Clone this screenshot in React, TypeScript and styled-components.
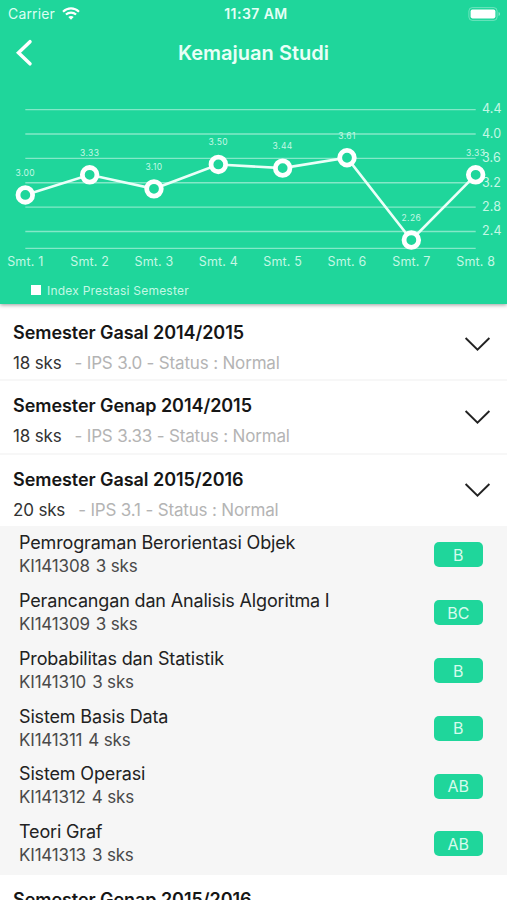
import React from "react";
import styled, { createGlobalStyle } from "styled-components";

const GREEN = "#1fd69b";

const GlobalStyle = createGlobalStyle`
  * { box-sizing: border-box; }
  html, body { margin: 0; height: 900px; overflow: hidden; background: #fff; }
  body { font-family: Inter, "Liberation Sans", sans-serif; }
`;

const Screen = styled.main`
  width: 507px;
  height: 900px;
  overflow: hidden;
  background: #fff;
`;

const Header = styled.header`
  position: relative;
  height: 304px;
  background: ${GREEN};
  color: #fff;
  box-shadow: 0 1px 4px rgba(0, 0, 0, 0.4);
`;

const StatusBar = styled.div`
  display: grid;
  grid-template-columns: 1fr auto 1fr;
  align-items: center;
  height: 27px;
  padding: 0 6px 0 8px;
`;

const Carrier = styled.div`
  display: flex;
  align-items: center;
  gap: 7px;
  font-size: 14px;
  letter-spacing: 0.15px;
  color: #dcfff2;
`;

const Clock = styled.div`
  padding-left: 3px;
  font-size: 14px;
  font-weight: 600;
  letter-spacing: 0.45px;
  color: #e6fff6;
`;

const BatteryIcon = styled.svg`
  justify-self: end;
`;

const NavBar = styled.nav`
  display: grid;
  grid-template-columns: 60px 1fr 60px;
  align-items: center;
  height: 51px;
`;

const BackIcon = styled.svg`
  margin-left: 13px;
`;

const Title = styled.h1`
  margin: 0;
  text-align: center;
  font-size: 20px;
  font-weight: 600;
  letter-spacing: 0.02px;
  color: #e9fff7;
`;

const Chart = styled.svg`
  display: block;
  font-family: Inter, sans-serif;
`;

const AxisLabel = styled.text`
  font-size: 12.5px;
  letter-spacing: 0.15px;
  fill: #c4f8e5;
`;

const ValueLabel = styled.text`
  font-size: 8.5px;
  letter-spacing: 0.4px;
  fill: #c4f8e5;
`;

const Legend = styled.div`
  display: flex;
  align-items: center;
  gap: 6px;
  height: 20px;
  padding-left: 31px;
  margin-top: 2px;
  font-size: 12px;
  letter-spacing: 0.22px;
  color: #c4f8e5;
`;

const LegendSwatch = styled.span`
  width: 10px;
  height: 10px;
  background: #fff;
`;

const SemesterRow = styled.button<{ $divided?: boolean; $afterPanel?: boolean }>`
  display: flex;
  align-items: center;
  justify-content: space-between;
  width: 100%;
  height: 73.3px;
  padding: 0 16px ${(p) => (p.$afterPanel ? "5px" : "0")} 13px;
  border: 0;
  border-top: 2px solid ${(p) => (p.$divided ? "#f7f7f7" : "#fff")};
  background: #fff;
  font-family: inherit;
  text-align: left;
`;

const List = styled.section`
  padding-top: 2px;
`;

const SemesterText = styled.div`
  padding-top: 9px;
`;

const SemesterName = styled.div`
  font-size: 18px;
  line-height: 24px;
  font-weight: 600;
  letter-spacing: -0.06px;
  color: #161616;
`;

const Meta = styled.div`
  display: flex;
  gap: 13px;
  margin-top: 6px;
  font-size: 17px;
  line-height: 24px;
  letter-spacing: -0.17px;
  color: #333;
`;

const MetaMuted = styled.span`
  color: #b4b4b4;
`;

const Courses = styled.div`
  height: 349px;
  background: #f6f6f6;
`;

const Course = styled.div`
  display: flex;
  align-items: center;
  justify-content: space-between;
  height: 57.8px;
  padding: 0.4px 24px 0 19px;
`;

const CourseName = styled.div`
  font-size: 18px;
  line-height: 24px;
  letter-spacing: -0.16px;
  color: #222;
`;

const CourseMeta = styled.div`
  display: flex;
  gap: 6px;
  font-size: 17px;
  line-height: 23.5px;
  letter-spacing: -0.18px;
  color: #4a4a4a;
`;

const Grade = styled.span`
  display: grid;
  place-items: center;
  width: 49.5px;
  height: 25px;
  border-radius: 5px;
  background: ${GREEN};
  color: #d5fbed;
  font-size: 16px;
`;

const points = [3.0, 3.33, 3.1, 3.5, 3.44, 3.61, 2.26, 3.33];
const ticks = [4.4, 4.0, 3.6, 3.2, 2.8, 2.4];
const CHART_TOP = 78;
const px = (i: number) => 25.3 + i * 64.34;
const py = (v: number) => 109.6 + (4.4 - v) * 60.95 - CHART_TOP;

function ProgressChart() {
  return (
    <Chart width="507" height="200" viewBox="0 0 507 200">
      {[...ticks.map(py), 170.3].map((y) => (
        <path key={y} d={`M25.3 ${y}H475.7`} stroke="#fff" strokeOpacity=".45" strokeWidth="1.3" />
      ))}
      <polyline
        points={points.map((v, i) => `${px(i)},${py(v)}`).join(" ")}
        fill="none"
        stroke="#eafff8"
        strokeWidth="2.6"
      />
      {ticks.map((t) => (
        <AxisLabel key={t} x="482" y={py(t) + 3.8}>
          {t.toFixed(1)}
        </AxisLabel>
      ))}
      {points.map((v, i) => (
        <g key={i}>
          <circle cx={px(i)} cy={py(v)} r="7.3" fill={GREEN} stroke="#fff" strokeWidth="4.8" />
          <ValueLabel x={px(i)} y={py(v) - 19} textAnchor="middle">
            {v.toFixed(2)}
          </ValueLabel>
          <AxisLabel x={px(i)} y="187.5" textAnchor="middle">
            {`Smt. ${i + 1}`}
          </AxisLabel>
        </g>
      ))}
    </Chart>
  );
}

type SemesterProps = {
  name: string;
  sks: number;
  ips: string;
  divided?: boolean;
  afterPanel?: boolean;
};

function Semester({ name, sks, ips, divided, afterPanel }: SemesterProps) {
  return (
    <SemesterRow $divided={divided} $afterPanel={afterPanel}>
      <SemesterText>
        <SemesterName>{name}</SemesterName>
        <Meta>
          <span>{sks} sks</span>
          <MetaMuted>- IPS {ips} - Status : Normal</MetaMuted>
        </Meta>
      </SemesterText>
      <svg width="27" height="16" viewBox="0 0 27 16" fill="none">
        <path d="M1.6 2 13.5 13.7 25.4 2" stroke="#222" strokeWidth="1.9" />
      </svg>
    </SemesterRow>
  );
}

const courses = [
  { name: "Pemrograman Berorientasi Objek", code: "KI141308", sks: 3, grade: "B" },
  { name: "Perancangan dan Analisis Algoritma I", code: "KI141309", sks: 3, grade: "BC" },
  { name: "Probabilitas dan Statistik", code: "KI141310", sks: 3, grade: "B" },
  { name: "Sistem Basis Data", code: "KI141311", sks: 4, grade: "B" },
  { name: "Sistem Operasi", code: "KI141312", sks: 4, grade: "AB" },
  { name: "Teori Graf", code: "KI141313", sks: 3, grade: "AB" },
];

export default function App() {
  return (
    <Screen>
      <GlobalStyle />
      <Header>
        <StatusBar>
          <Carrier>
            Carrier
            <svg width="18" height="13" viewBox="0 0 18 13" fill="none" stroke="#fff" strokeWidth="2.1">
              <path d="M1 4.7C5.6.3 12.4.3 17 4.7" />
              <path d="M3.9 7.6c2.9-2.7 7.3-2.7 10.2 0" />
              <path d="M6.3 10.1c1.5-1.4 3.9-1.4 5.4 0L9 12.7Z" fill="#fff" stroke="none" />
            </svg>
          </Carrier>
          <Clock>11:37 AM</Clock>
          <BatteryIcon width="33" height="14" viewBox="0 0 33 14">
            <rect x=".9" y=".6" width="28.2" height="12.8" rx="3.4" fill="none" stroke="#fff" strokeOpacity=".35" />
            <rect x="2.6" y="2.6" width="24.8" height="8.8" rx="1.8" fill="#fff" />
            <path d="M30.6 5c1.8.8 1.8 3.2 0 4Z" fill="#fff" fillOpacity=".5" />
          </BatteryIcon>
        </StatusBar>
        <NavBar>
          <BackIcon width="22" height="30" viewBox="0 0 22 30" fill="none">
            <path d="M17 3.7 5.5 14.8 17 25.8" stroke="#fff" strokeWidth="3.5" strokeLinecap="round" />
          </BackIcon>
          <Title>Kemajuan Studi</Title>
        </NavBar>
        <ProgressChart />
        <Legend>
          <LegendSwatch />
          Index Prestasi Semester
        </Legend>
      </Header>
      <List>
        <Semester name="Semester Gasal 2014/2015" sks={18} ips="3.0" />
        <Semester name="Semester Genap 2014/2015" sks={18} ips="3.33" divided />
        <Semester name="Semester Gasal 2015/2016" sks={20} ips="3.1" divided />
        <Courses>
          {courses.map((c) => (
            <Course key={c.code}>
              <div>
                <CourseName>{c.name}</CourseName>
                <CourseMeta>
                  <span>{c.code}</span>
                  <span>{c.sks} sks</span>
                </CourseMeta>
              </div>
              <Grade>{c.grade}</Grade>
            </Course>
          ))}
        </Courses>
        <Semester name="Semester Genap 2015/2016" sks={20} ips="3.5" afterPanel />
      </List>
    </Screen>
  );
}
